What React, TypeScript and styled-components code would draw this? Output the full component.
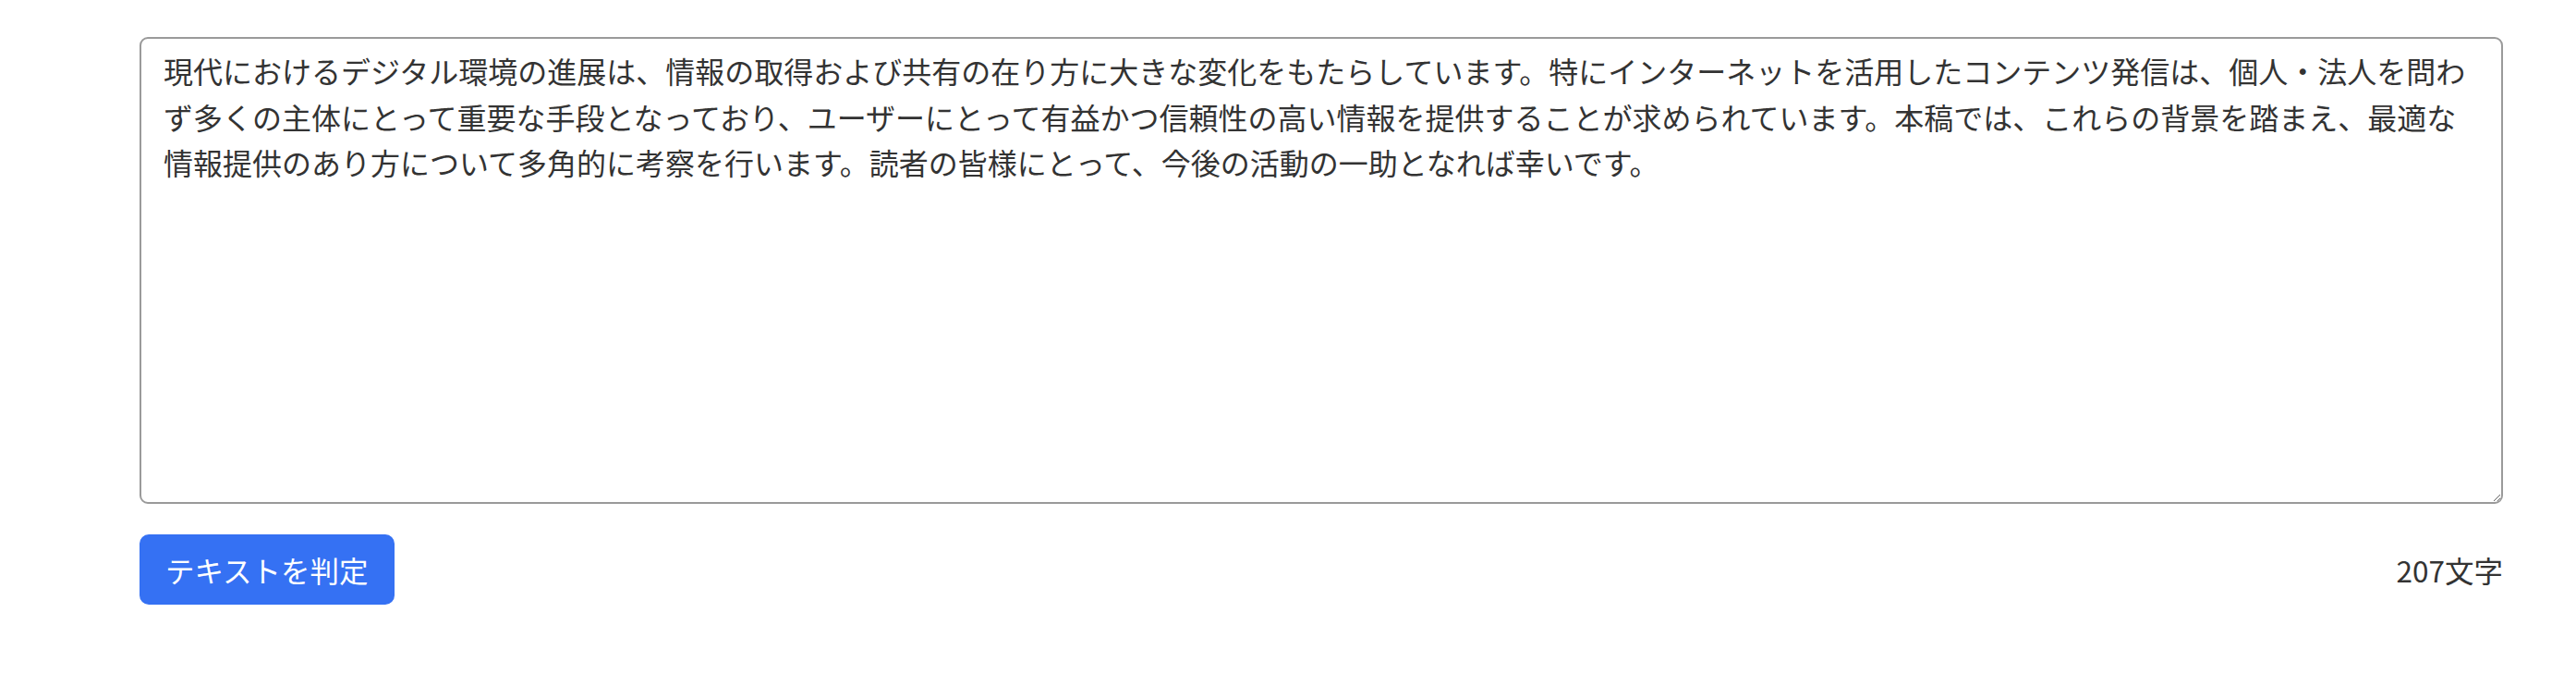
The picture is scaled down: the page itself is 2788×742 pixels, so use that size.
import { useState } from "react";
import styled, { createGlobalStyle } from "styled-components";

const initialText =
  "現代におけるデジタル環境の進展は、情報の取得および共有の在り方に大きな変化をもたらしています。特にインターネットを活用したコンテンツ発信は、個人・法人を問わず多くの主体にとって重要な手段となっており、ユーザーにとって有益かつ信頼性の高い情報を提供することが求められています。本稿では、これらの背景を踏まえ、最適な情報提供のあり方について多角的に考察を行います。読者の皆様にとって、今後の活動の一助となれば幸いです。";

const App = () => {
  const [text, setText] = useState(initialText);

  return (
    <>
      <GlobalStyle />
      <Page>
        <TextInput value={text} onChange={(e) => setText(e.target.value)} />
        <Footer>
          <JudgeButton type="button">テキストを判定</JudgeButton>
          <CharCount>{text.length}文字</CharCount>
        </Footer>
      </Page>
    </>
  );
};

export default App;

const GlobalStyle = createGlobalStyle`
  body {
    margin: 0;
    background: #fff;
    font-family: "Noto Sans CJK JP", "Noto Sans", sans-serif;
    color: #333;
  }
`;

const Page = styled.div`
  padding: 40px 79px 0 151px;
`;

const TextInput = styled.textarea`
  display: block;
  box-sizing: border-box;
  width: 100%;
  height: 505px;
  padding: 10px 24px;
  border: 2px solid #9a9a9a;
  border-radius: 9px;
  font-family: inherit;
  font-size: 32px;
  line-height: 1.55;
  color: #333;
  background: #fff;
  outline: none;
`;

const Footer = styled.div`
  display: flex;
  align-items: center;
  justify-content: space-between;
  margin-top: 33px;
`;

const JudgeButton = styled.button`
  height: 76px;
  padding: 0 28px;
  border: none;
  border-radius: 10px;
  background: #3571f3;
  color: #fff;
  font-family: inherit;
  font-size: 31.5px;
  cursor: pointer;
`;

const CharCount = styled.span`
  font-size: 31.5px;
  color: #333;
`;
